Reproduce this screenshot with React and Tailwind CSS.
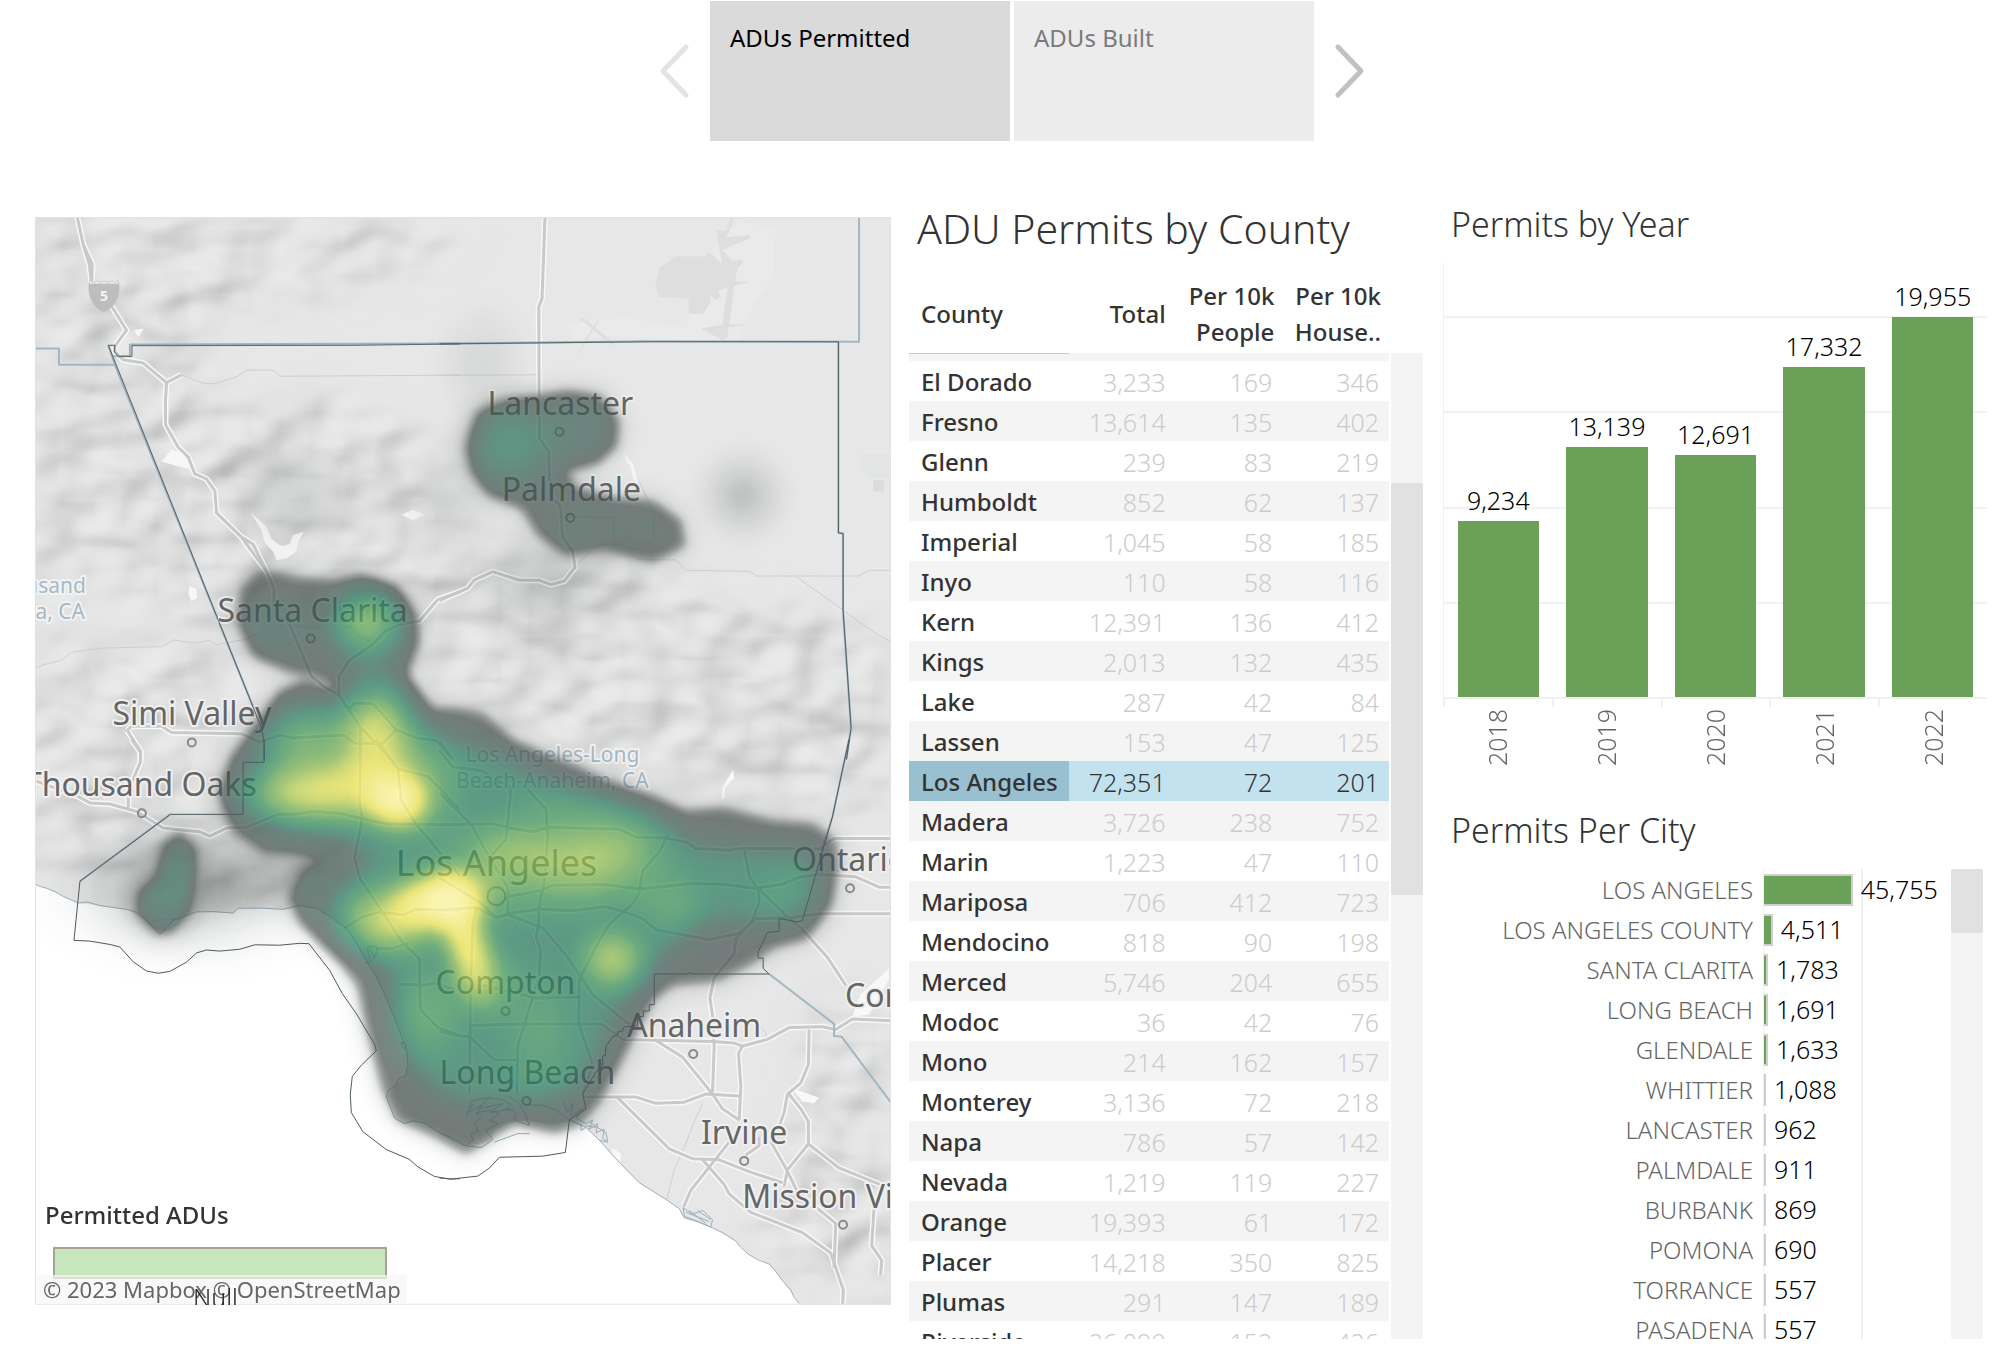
import React from "react";

const counties = [
  ["El Dorado", "3,233", "169", "346"],
  ["Fresno", "13,614", "135", "402"],
  ["Glenn", "239", "83", "219"],
  ["Humboldt", "852", "62", "137"],
  ["Imperial", "1,045", "58", "185"],
  ["Inyo", "110", "58", "116"],
  ["Kern", "12,391", "136", "412"],
  ["Kings", "2,013", "132", "435"],
  ["Lake", "287", "42", "84"],
  ["Lassen", "153", "47", "125"],
  ["Los Angeles", "72,351", "72", "201"],
  ["Madera", "3,726", "238", "752"],
  ["Marin", "1,223", "47", "110"],
  ["Mariposa", "706", "412", "723"],
  ["Mendocino", "818", "90", "198"],
  ["Merced", "5,746", "204", "655"],
  ["Modoc", "36", "42", "76"],
  ["Mono", "214", "162", "157"],
  ["Monterey", "3,136", "72", "218"],
  ["Napa", "786", "57", "142"],
  ["Nevada", "1,219", "119", "227"],
  ["Orange", "19,393", "61", "172"],
  ["Placer", "14,218", "350", "825"],
  ["Plumas", "291", "147", "189"],
  ["Riverside", "26,090", "152", "426"],
];

const years = [
  { year: "2018", value: 9234 },
  { year: "2019", value: 13139 },
  { year: "2020", value: 12691 },
  { year: "2021", value: 17332 },
  { year: "2022", value: 19955 },
];
const YEAR_MAX = 22800;

const cities = [
  ["LOS ANGELES", 45755],
  ["LOS ANGELES COUNTY", 4511],
  ["SANTA CLARITA", 1783],
  ["LONG BEACH", 1691],
  ["GLENDALE", 1633],
  ["WHITTIER", 1088],
  ["LANCASTER", 962],
  ["PALMDALE", 911],
  ["BURBANK", 869],
  ["POMONA", 690],
  ["TORRANCE", 557],
  ["PASADENA", 557],
];
const CITY_MAX = 50000;

/* ---------- map data, one coordinate space per tile ---------- */

const TILES = {
  nw: "translate(0 200) scale(0.33333 0.35714)",
  ne: "translate(440 200) scale(0.33333 0.35714)",
  sw: "translate(0 740) scale(0.33333 0.36991)",
  se: "translate(440 740) scale(0.33333 0.36991)",
};

const roads = {
  nw: [
    "M230,40 L250,125 L268,180 L275,235 L330,290 L380,365 L345,410 L345,425 L370,448 L430,457 L500,512 L497,560 L497,630 L535,693 L565,720 L585,768 L620,782 L645,815 L650,877 L725,945 L800,1040 L823,1090 L823,1150 L870,1190 L935,1335 L975,1365 L1018,1388 L1080,1475 L1175,1568",
    "M250,125 L277,180 L275,235",
    "M500,512 L545,490",
    "M725,945 L760,965 L800,1040",
    "M1018,1388 L1018,1335 L1050,1290 L1120,1245 L1155,1210 L1200,1190 L1260,1180 L1315,1120 L1382,1098",
    "M382,1487 L395,1475 L485,1475 L515,1493 L725,1496 L780,1520 L840,1500 L880,1508 L1030,1500 L1065,1523 L1150,1523 L1190,1485 L1120,1412 L1065,1410 L1045,1430",
    "M1190,1485 L1250,1508 L1310,1515 L1360,1568",
    "M382,1487 L422,1545 L422,1568",
    "M1083,1475 L1080,1568",
  ],
  ne: [
    "M0,1123 L85,1088 L105,1065 L160,1042 L240,1066 L300,1066 L335,1078 L375,1068 L407,1030 L400,985 L370,945 L363,860 L332,825 L328,705 L300,668 L298,300 L308,275 L317,40",
    "M0,1520 L40,1568",
  ],
  sw: [
    "M395,0 L422,35 L422,60 L385,140 L385,185",
    "M100,110 L235,155 L270,172 L330,175 L410,195 L490,240 L600,250 L630,262 L680,240 L740,238 L835,202 L890,202 L940,195 L1020,200 L1090,215 L1160,228 L1382,232",
    "M1083,0 L1080,170 L1088,215 L1065,320 L1080,375 L1150,470 L1205,545 L1260,595 L1262,730 L1315,780 L1382,802",
    "M1130,0 L1195,80 L1205,165 L1250,230 L1325,310 L1382,370",
    "M1195,80 L1285,100 L1382,190",
    "M1035,510 L1090,480 L1140,468 L1215,475 L1245,460 L1382,462",
    "M1130,565 L1180,565 L1225,552",
    "M1200,663 L1280,665 L1300,660 L1382,680",
  ],
  se: [
    "M0,232 L160,228 L210,240 L280,250 L325,238 L540,243 L590,265 L680,267 L740,278 L770,295 L870,300 L910,295 L1140,297 L1185,268 L1360,268",
    "M0,30 L40,75 L130,85 L170,110 L215,130 L200,270 L150,320",
    "M265,135 L320,190 L325,265",
    "M0,462 L110,455 L170,482 L230,468 L300,460 L400,463 L500,453 L550,465 L610,485 L650,515 L810,542 L900,525 L950,485 L1060,482 L1140,472 L1360,472",
    "M205,425 L300,410 L340,395 L500,393 L600,405 L760,390 L850,392 L950,403 L1030,392 L1080,373 L1140,366 L1250,372 L1320,400 L1360,400",
    "M915,297 L930,370 L957,405 L960,440 L940,490 L890,540 L885,580 L825,645 L812,700 L822,760 L825,830 L820,955",
    "M685,260 L660,305 L610,355 L600,415 L580,445 L510,500 L480,545 L420,650 L418,770 L460,880 L430,960",
    "M325,265 L315,380 L298,460 L298,500 L290,535 L303,570 L300,640 L235,830 L232,960",
    "M0,145 L95,230 L150,320 L205,400 L205,475 L310,510 L385,590 L460,690 L560,765 L650,815 L730,860 L820,960 L850,1000 L900,1030",
    "M110,455 L100,500 L92,700 L90,960",
    "M0,375 L120,440 L170,482",
    "M100,660 L200,680 L290,700 L425,697",
    "M85,775 L250,770 L485,770 L550,812 L820,818 L885,822 L910,830 L985,812 L1050,780 L1150,778 L1190,785 L1240,757 L1360,762",
    "M0,790 L45,800 L90,805 L165,868 L240,868",
    "M430,968 L590,968 L650,985 L735,982 L800,960 L900,965",
    "M535,970 L690,1108 L760,1135 L840,1138 L930,1170 L1030,1200",
    "M900,1030 L905,940 L898,850 L910,830",
    "M957,403 L1045,480 L1085,510 L1165,590 L1220,665",
    "M870,1090 L755,1220 L733,1265",
    "M790,1138 L855,1205 L870,1230 L935,1280 L1090,1335 L1175,1390 L1190,1430 L1213,1490 L1210,1540",
    "M995,1090 L1040,1160 L1075,1225 L1190,1310 L1185,1430",
    "M1110,785 L1108,880 L1085,930 L1045,960 L1035,1010 L1015,1060",
    "M1045,955 L1085,1000 L1108,1035 L1108,1095 L1200,1160 L1360,1218",
    "M1108,1095 L1045,1165 L1035,1210",
    "M1305,1270 L1298,1370 L1328,1410 L1325,1450",
    "M960,1075 L960,1100 L920,1125",
  ],
};

const minorRoads = {
  nw: [
    "M545,490 L610,514 L650,514 L712,495 L740,477 L820,477 L840,494 L1382,491",
    "M105,1312 L130,1303 L185,1290 L215,1268 L305,1256 L485,1252 L520,1233 L585,1242 L628,1235 L650,1247 L735,1232 L820,1195",
    "M880,1195 L960,1200 L990,1220 L1030,1195 L1060,1200 L1080,1225 L1120,1240",
  ],
  ne: [
    "M0,491 L298,490",
    "M370,888 L523,890 L523,942 L595,1008 L710,1009 L740,1038 L932,1041 L950,1054 L1258,1054 L1290,1038 L1360,1038",
    "M407,1030 L450,985 L485,965 L550,965",
    "M1072,1056 L1212,1150 L1310,1215 L1360,1240",
    "M600,790 L645,880 L643,945 L600,995",
  ],
  sw: ["M450,497 L480,487 L540,485"],
  se: [
    "M965,780 L982,795 L978,805",
    "M205,480 L240,515 L280,535 L285,570",
    "M790,985 L765,1035 L735,1105 L705,1165 L683,1245",
  ],
};

const seaShapes = {
  sw: "M95,388 L140,403 L190,425 L235,443 L300,450 L380,460 L430,485 L480,528 L520,490 L590,467 L700,470 L715,457 L790,457 L850,460 L900,450 L950,457 L1000,485 L1040,512 L1100,600 L1160,700 L1210,815 L1225,880 L1218,910 L1190,935 L1160,968 L1185,1025 L1215,1040 L1260,1035 L1310,1060 L1382,1088 L1382,1600 L95,1600 Z",
  se: "M58,1092 L80,1100 L150,1090 L165,1060 L205,1040 L270,1030 L330,1045 L390,1035 L440,1050 L480,1085 L540,1145 L600,1200 L680,1245 L720,1270 L735,1295 L820,1322 L890,1358 L930,1395 L990,1420 L1030,1465 L1080,1527 L1080,1600 L0,1600 L0,1065 Z",
};

const coast = {
  sw: [
    "M95,388 L120,398 L140,403 L165,412 L190,425 L235,443 L262,440 L300,450 L380,460 L410,468 L445,495 L480,528 L500,512 L520,490 L590,467 L640,466 L700,470 L715,457 L790,457 L850,460 L900,450 L950,457 L1000,485 L1040,512 L1070,550 L1100,600 L1130,640 L1160,700 L1185,755 L1210,815 L1222,845 L1225,880 L1218,910 L1197,918 L1190,935 L1165,950 L1160,968 L1172,995 L1185,1025 L1215,1040 L1240,1032 L1280,1040 L1310,1060 L1382,1088",
    "M1103,562 L1130,560 L1133,575 L1118,600 L1100,607 L1100,598 L1112,592 L1105,575 Z M1110,565 L1125,590",
    "M1205,820 L1220,825 L1218,838 L1207,832 Z",
  ],
  se: [
    "M0,1065 L30,1080 L60,1093 L80,1100 L100,1085 L95,1068 L115,1060 L105,1040 L125,1020 L110,1010 L150,1005 L180,1012 L150,1030 L175,1040 L140,1060 L160,1082 L150,1090 L125,1105 L80,1100",
    "M80,1020 L95,980 L140,970 L190,975 L215,990 L200,1000 L230,1010 L225,1030 L270,1045 L260,1020 L240,985 L205,965",
    "M100,985 L90,1010 L125,990 L110,1020 M150,965 L120,1000 L190,985 L150,1010 L220,1000",
    "M265,990 L310,990 L350,1003 L390,1030 L440,1050 L480,1085 L540,1145 L600,1200 L680,1245 L720,1270 L735,1295 L775,1305 L820,1322",
    "M370,980 L385,1010 L400,985 L395,1020 L430,1000 L410,1025 L440,1040 L460,1030 L450,1055 L475,1040 L470,1065 L495,1055 L490,1080 L505,1090 L480,1085",
    "M425,1040 L425,1058 L440,1050 M450,1035 L500,1065 L505,1088 M440,1045 L470,1050",
    "M732,1268 L735,1290 L815,1320 L820,1300 L790,1275 L760,1285 L732,1268 M740,1280 L810,1305 M750,1275 L800,1310 M775,1275 L815,1300",
    "M820,1322 L850,1335 L890,1358 L905,1375 L930,1395 L960,1410 L990,1420 L1010,1440 L1030,1465 L1055,1490 L1065,1510 L1080,1527",
    "M165,1090 L235,1067 L270,1067",
  ],
};

const countyBlue = {
  nw: ["M100,416 L177,416 L177,462 L345,462 L325,407", "M340,438 L390,438 L390,405 L1382,402", "M345,462 L785,1478"],
  ne: ["M0,403 L630,396 L1260,397 L1260,40", "M1198,397 L1198,933 L1212,935 L1212,1150 L1236,1480 L1222,1568"],
  sw: ["M240,384 L512,202"],
  se: ["M1230,0 L1180,210 L1140,325", "M990,635 L1185,770 L1185,803 L1208,805 L1360,988"],
};

const countyDark = {
  nw: ["M1382,403 L1060,407 L396,408 L396,438 L355,438 L343,425 L345,407 L325,407 L785,1480 L793,1520 L793,1568"],
  ne: ["M0,403 L630,397 L1198,397 L1198,933 L1212,935 L1212,1150 L1236,1480 L1222,1568"],
  sw: [
    "M793,0 L793,62 L730,62 L730,203 L512,203 L240,384 L222,544 L270,546 L330,555 L360,562 L400,602 L440,627 L475,633 L510,628 L560,603 L590,578 L620,570 L660,573 L720,568 L765,556 L840,557 L900,552 L928,553 L990,625 L1028,688 L1070,742 L1125,825 L1130,843 L1085,882 L1058,912 L1052,960 L1055,1010 L1090,1062 L1160,1110 L1230,1137 L1255,1157 L1305,1183 L1350,1190 L1382,1189",
  ],
  se: [
    "M1230,0 L1180,210 L1090,490 L1075,494 L1020,485 L1020,520 L985,522 L957,575 L957,592 L972,592 L972,620 L990,635 L760,635 L750,632 L745,635 L645,635 L645,718 L630,718 L630,735 L612,735 L612,750 L595,750 L595,775 L555,778 L550,790 L535,792 L535,800 L520,805 L500,830 L498,855 L490,857 L490,885 L470,900 L430,960 L440,1000 L390,1030 L378,1118 L310,1128 L180,1131 L150,1160 L115,1182 L35,1190 L0,1187",
  ],
};

const cityLabels = [
  { t: "Santa Clarita", x: 313, y: 622, c: [311, 639] },
  { t: "Simi Valley", x: 192, y: 726, c: [192, 743] },
  { t: "Lancaster", x: 561, y: 415, c: [560, 432] },
  { t: "Palmdale", x: 572, y: 501, c: [571, 518] },
  { t: "Thousand Oaks", x: 257, y: 797, a: "end", c: [142, 814] },
  { t: "Compton", x: 506, y: 995, c: [506, 1012] },
  { t: "Long Beach", x: 528, y: 1085, c: [527, 1102] },
  { t: "Anaheim", x: 695, y: 1038, c: [694, 1055] },
  { t: "Irvine", x: 745, y: 1145, c: [745, 1162] },
  { t: "Mission Viejo", x: 743, y: 1209, a: "start", c: [844, 1226] },
  { t: "Ontario", x: 793, y: 872, a: "start", c: [851, 889] },
  { t: "Corona", x: 846, y: 1008, a: "start" },
];

const silhouettes = [
  "M240,621 L243,590 L262,573 L300,580 L335,583 L363,577 L395,588 L415,615 L418,645 L405,675 L433,712 L460,711 L483,716 L513,743 L567,764 L600,779 L653,799 L687,813 L723,810 L773,823 L813,826 L835,842 L837,869 L830,906 L807,938 L773,947 L753,962 L717,980 L673,984 L653,999 L640,1022 L623,1056 L600,1100 L580,1124 L555,1132 L515,1122 L490,1138 L467,1153 L435,1135 L400,1120 L385,1090 L367,1020 L360,985 L340,960 L302,922 L293,897 L305,873 L328,862 L300,853 L265,850 L235,830 L222,795 L232,760 L262,725 L280,694 L305,684 L335,694 L345,692 L325,676 L290,670 L255,655 Z",
  "M470,446 L480,415 L507,403 L567,393 L600,398 L617,421 L615,446 L597,462 L563,470 L575,490 L615,500 L653,503 L680,522 L684,545 L653,561 L607,548 L567,553 L540,532 L523,507 L490,493 L475,470 Z",
  "M166,846 L180,836 L193,850 L190,880 L186,912 L170,930 L158,932 L140,912 L142,895 L160,880 Z",
];

const basin =
  "M262,770 L290,722 L320,712 L360,708 L388,690 L408,712 L440,738 L500,752 L560,788 L620,808 L690,842 L760,850 L815,852 L815,890 L790,920 L740,925 L700,925 L650,975 L620,1010 L600,1060 L580,1095 L545,1105 L480,1108 L435,1095 L405,1050 L392,980 L358,940 L330,905 L350,880 L372,856 L340,838 L290,828 L255,805 Z";

/* x, y, rx, ry, strength, rotation */
const hotspots = [
  [512, 445, 75, 70, 0.25, 0],
  [580, 430, 60, 55, 0.13, 0],
  [575, 520, 60, 45, 0.07, 0],
  [640, 530, 60, 40, 0.04, 0],
  [367, 622, 60, 56, 0.48, 0],
  [277, 628, 70, 50, 0.12, 0],
  [370, 650, 60, 70, 0.1, 0],
  [293, 732, 64, 50, 0.14, 0],
  [345, 765, 150, 95, 0.3, 0],
  [376, 728, 56, 80, 0.44, 0],
  [317, 793, 125, 50, 0.46, -4],
  [398, 802, 50, 44, 0.62, 15],
  [400, 790, 90, 76, 0.36, 20],
  [442, 900, 72, 44, 0.66, -10],
  [430, 905, 110, 66, 0.4, -10],
  [466, 940, 40, 96, 0.6, -16],
  [485, 975, 50, 60, 0.2, -16],
  [383, 925, 80, 54, 0.4, 0],
  [515, 852, 100, 56, 0.38, 0],
  [605, 855, 100, 70, 0.44, -12],
  [540, 890, 120, 60, 0.18, 0],
  [560, 807, 80, 40, 0.14, 0],
  [670, 902, 60, 50, 0.2, 0],
  [613, 960, 54, 52, 0.46, 0],
  [793, 899, 60, 50, 0.1, 0],
  [540, 1035, 60, 85, 0.16, 0],
  [424, 1023, 62, 70, 0.2, 0],
  [470, 990, 120, 60, 0.12, 0],
];

const haze = [
  [743, 496, 60, 60, 0.13],
  [483, 365, 60, 80, 0.06],
  [290, 495, 80, 80, 0.08],
  [540, 580, 110, 70, 0.11],
  [190, 890, 180, 100, 0.12],
  [166, 890, 100, 80, 0.08],
  [270, 880, 120, 60, 0.08],
  [450, 500, 80, 80, 0.06],
];

const peaks = [
  "M35,217 L120,217 L330,230 L480,217 L420,270 L250,300 L180,340 L230,420 L330,400 L440,450 L460,560 L430,620 L200,640 L100,560 L35,660 Z",
  "M430,560 L600,545 L700,590 L892,640 L892,810 L720,800 L560,750 L440,700 Z",
  "M60,660 L200,640 L240,700 L180,780 L320,850 L360,900 L200,905 L35,860 L35,700 Z",
  "M820,1000 L892,1020 L892,1305 L760,1260 L800,1120 Z",
];

function Lines({ data, ...props }) {
  return Object.keys(data).map((tile) => (
    <g key={tile} transform={TILES[tile]} fill="none" strokeLinejoin="round" {...props}>
      {[].concat(data[tile]).map((d) => (
        <path key={d} d={d} vectorEffect="non-scaling-stroke" />
      ))}
    </g>
  ));
}

function CountyMap() {
  return (
    <svg
      viewBox="35 217 857 1089"
      className="block w-full"
      role="img"
      aria-label="Heat map of permitted ADUs in Los Angeles County"
      fontFamily='"Noto Sans", sans-serif'
    >
      <defs>
        <radialGradient id="spot">
          <stop offset="0" stopOpacity="1" />
          <stop offset="0.2" stopOpacity="0.9" />
          <stop offset="0.4" stopOpacity="0.65" />
          <stop offset="0.6" stopOpacity="0.35" />
          <stop offset="0.8" stopOpacity="0.1" />
          <stop offset="1" stopOpacity="0" />
        </radialGradient>
        <filter id="edge" x="-20%" y="-20%" width="140%" height="140%">
          <feGaussianBlur stdDeviation="5" />
        </filter>
        <filter id="inner" x="-20%" y="-20%" width="140%" height="140%">
          <feGaussianBlur stdDeviation="13" />
        </filter>
        <filter id="halo" x="-40%" y="-40%" width="180%" height="180%">
          <feGaussianBlur stdDeviation="12" />
        </filter>
        <filter
          id="density"
          filterUnits="userSpaceOnUse"
          x="0"
          y="180"
          width="940"
          height="1150"
          colorInterpolationFilters="sRGB"
        >
          <feColorMatrix
            in="SourceGraphic"
            values="0 0 0 1 0  0 0 0 1 0  0 0 0 1 0  0 0 0 0 1"
          />
          <feComponentTransfer result="ramp">
            <feFuncR type="table" tableValues="0.27 0.27 0.27 0.27 0.23 0.15 0.24 0.5 0.93 1 1" />
            <feFuncG type="table" tableValues="0.31 0.31 0.31 0.31 0.37 0.49 0.58 0.71 0.9 0.97 0.98" />
            <feFuncB type="table" tableValues="0.3 0.3 0.3 0.3 0.33 0.37 0.34 0.3 0.31 0.6 0.74" />
          </feComponentTransfer>
          <feComponentTransfer in="SourceGraphic" result="cover">
            <feFuncA type="table" tableValues="0 0.16 0.44 0.71 0.72 0.72 0.72 0.72 0.72 0.74 0.76" />
          </feComponentTransfer>
          <feComposite in="ramp" in2="cover" operator="in" />
        </filter>
        <filter
          id="terrain"
          filterUnits="userSpaceOnUse"
          x="0"
          y="180"
          width="940"
          height="1150"
          colorInterpolationFilters="sRGB"
        >
          <feTurbulence type="fractalNoise" baseFrequency="0.016 0.022" numOctaves="2" seed="11" result="noise" />
          <feDiffuseLighting in="noise" surfaceScale="11" diffuseConstant="1.02" lightingColor="#e9ebea" result="light">
            <feDistantLight azimuth="225" elevation="62" />
          </feDiffuseLighting>
          <feGaussianBlur in="SourceAlpha" stdDeviation="22" result="soft" />
          <feComposite in="light" in2="soft" operator="in" />
        </filter>
      </defs>

      <rect x="35" y="217" width="857" height="1089" fill="#e7e7e7" />
      <g filter="url(#terrain)" opacity="0.42">
        {peaks.map((d) => (
          <path key={d} d={d} />
        ))}
      </g>

      {/* dry lake and airfields */}
      <g transform={TILES.ne}>
        <path d="M800,160 L900,60 L1010,80 L1000,220 L940,300 L900,390 L760,400 L520,380 L400,390 L380,350 L560,330 L740,360 Z" fill="#eaeaea" />
        <path d="M660,190 L710,158 L800,158 L810,145 L850,180 L840,135 L832,85 L862,85 L875,48 L885,52 L862,105 L932,98 L935,106 L850,140 L880,172 L905,165 L912,175 L895,190 L888,228 L930,230 L885,240 L870,348 L925,350 L868,358 L866,385 L850,393 L785,360 L850,350 L865,245 L835,255 L845,272 L830,280 L815,268 L812,290 L790,320 L750,318 L748,276 L660,272 L648,240 Z" fill="#dedede" />
        <path d="M420,332 L430,328 L528,405 L520,408 Z M485,328 L418,430 L416,428 L460,355 Z" fill="#dedede" />
        <path d="M1265,712 L1350,712 L1350,780 L1290,780 L1265,750 Z" fill="#e2e5e4" />
        <path d="M1302,785 L1335,785 L1335,817 L1302,817 Z" fill="#dcdcdc" />
        <path d="M555,705 L570,730 L582,740 L592,780 L605,820 L590,800 L578,770 L575,745 L562,735 Z" fill="#f6f6f6" />
      </g>
      {/* reservoirs */}
      <g transform={TILES.nw} fill="#f7f7f7">
        <path d="M752,875 L800,915 L815,950 L830,960 L845,970 L870,965 L880,940 L912,930 L895,960 L890,985 L860,1005 L830,1010 L820,985 L795,960 L785,925 Z" />
        <path d="M485,733 L515,700 L560,715 L575,755 L530,745 Z" />
        <path d="M402,365 L432,360 L415,385 Z" />
        <path d="M568,1082 L590,1090 L592,1115 L575,1125 L566,1105 Z" />
        <path d="M1205,882 L1240,868 L1275,882 L1240,898 Z" />
      </g>
      <g transform={TILES.se} fill="#f8f8f8">
        <path d="M850,130 L882,82 L885,105 L858,130 L855,160 L848,162 Z" />
        <path d="M1060,945 L1110,960 L1140,970 L1125,985 L1090,980 Z" />
        <path d="M1240,750 L1265,690 L1350,620 L1350,650 L1290,745 Z" />
        <path d="M515,1105 L545,1120 L545,1140 L530,1145 Z" />
      </g>

      <Lines data={seaShapes} stroke="none" fill="#ffffff" />
      <Lines data={minorRoads} stroke="#cfcfcf" strokeWidth="1" />
      <Lines data={roads} stroke="#f8f8f8" strokeWidth="6" />
      <Lines data={roads} stroke="#c9c9c9" strokeWidth="3" />
      <Lines data={coast} stroke="#9cb0bd" strokeWidth="1" />
      <Lines data={countyBlue} stroke="#a3b6c2" strokeWidth="2" />

      {/* interstate shield */}
      <g>
        <path d="M89,283 H119 C121,294 116,308 104,312 C92,308 87,294 89,283 Z" fill="#bdbdbd" />
        <path d="M90,280 Q93,284 97,281 Q101,284 104,281 Q108,284 112,281 Q116,284 118,280 L119,284 H89 Z" fill="#f4f4f4" stroke="#c6c6c6" />
        <text x="104" y="301" textAnchor="middle" fontSize="14" fontWeight="700" fill="#f4f4f4">5</text>
      </g>

      <g textAnchor="middle" fontSize="21" fill="#a6b9c6" stroke="#f2f2f2" strokeWidth="4" strokeLinejoin="round" style={{ paintOrder: "stroke" }}>
        <text x="553" y="763">Los Angeles-Long</text>
        <text x="553" y="789">Beach-Anaheim, CA</text>
        <text x="86" y="593" textAnchor="end">Thousand</text>
        <text x="85" y="619" textAnchor="end">Oaks-Ventura, CA</text>
      </g>

      <g fontSize="32" fill="#666666" stroke="#f0f0f0" strokeWidth="4" strokeLinejoin="round" style={{ paintOrder: "stroke" }}>
        {cityLabels.map((l) => (
          <text key={l.t} x={l.x} y={l.y} textAnchor={l.a || "middle"}>{l.t}</text>
        ))}
        <text x="497" y="877" textAnchor="middle" fontSize="36">Los Angeles</text>
      </g>
      <g fill="none" stroke="#8a8a8a" strokeWidth="2">
        {cityLabels.filter((l) => l.c).map((l) => (
          <circle key={l.t} cx={l.c[0]} cy={l.c[1]} r="4" />
        ))}
        <circle cx="497" cy="897" r="9" />
      </g>

      <g filter="url(#density)">
        <g filter="url(#halo)" opacity="0.14">
          {silhouettes.map((d) => (
            <path key={d} d={d} stroke="black" strokeWidth="12" />
          ))}
        </g>
        <g filter="url(#edge)" opacity="0.2">
          {silhouettes.map((d) => (
            <path key={d} d={d} stroke="black" strokeWidth="6" strokeLinejoin="round" />
          ))}
        </g>
        <path d={basin} filter="url(#inner)" opacity="0.25" />
        {haze.map(([x, y, rx, ry, o]) => (
          <ellipse key={`${x}-${y}`} cx={x} cy={y} rx={rx} ry={ry} fill="url(#spot)" opacity={o} />
        ))}
        {hotspots.map(([x, y, rx, ry, o, r]) => (
          <ellipse key={`${x}-${y}`} cx={x} cy={y} rx={rx} ry={ry} fill="url(#spot)" opacity={o} transform={`rotate(${r} ${x} ${y})`} />
        ))}
      </g>

      <Lines data={countyDark} stroke="#4d5a60" strokeWidth="1" />
      <rect x="35.5" y="217.5" width="856" height="1088" fill="none" stroke="#e2e2e2" />
    </svg>
  );
}

function MapPanel() {
  return (
    <section className="relative mt-5 overflow-hidden">
      <CountyMap />
      <div className="absolute bottom-0 left-0 flex h-[106px] w-[376px] flex-col gap-4">
        <h3 className="pl-2.5 text-2xl leading-8 font-medium text-[#333]">Permitted ADUs</h3>
        <div className="ml-[18px] h-8 w-[334px] border-2 border-[#a9a294] bg-[#c8e6bc]" />
        <div className="absolute bottom-0.5 left-0.5 bg-[#f7f7f7]/70 px-1.5 text-[22px] leading-7 whitespace-nowrap text-[#666]">
          <a href="#mapbox">© 2023 Mapbox</a> <a href="#osm">© OpenStreetMap</a>
        </div>
        <div className="absolute -bottom-2 left-[158px] text-[25px] leading-8 font-light text-[#222]">Null</div>
      </div>
    </section>
  );
}

function CountyTable() {
  return (
    <section className="pr-0.5">
      <h2 className="pl-2 text-[41px] leading-[62px] font-light whitespace-nowrap text-[#333]">ADU Permits by County</h2>
      <div className="mt-[18px] flex h-[1062px] gap-0.5 overflow-hidden">
        <div className="min-w-0 flex-1 overflow-hidden">
          <table className="w-full table-fixed text-2xl">
            <thead>
              <tr className="h-[76px] leading-9 text-[#333]">
                <th scope="col" className="w-1/3 border-b border-[#c8c8c8] pb-0.5 pl-3 text-left font-medium">County</th>
                <th scope="col" className="pr-2.5 pb-0.5 text-right font-medium">Total</th>
                <th scope="col" className="pr-2 pb-0.5 text-right font-medium whitespace-nowrap">Per 10k<br />People</th>
                <th scope="col" className="pr-2 pb-0.5 text-right font-medium whitespace-nowrap">Per 10k<br />House..</th>
              </tr>
            </thead>
            <tbody>
              <tr className="h-2 bg-[#f4f4f4]" aria-hidden="true"><td colSpan={4} /></tr>
              {counties.map(([name, total, people, homes], i) => {
                const on = name === "Los Angeles";
                const row = on ? "h-10 bg-[#c3e2ef] text-[#333]" : i % 2 ? "h-10 bg-[#f4f4f4] text-[#cccccc]" : "h-10 text-[#cccccc]";
                return (
                  <tr key={name} className={row}>
                    <th scope="row" className={on ? "bg-[#99c0d0] pt-0.5 pl-3 text-left font-medium whitespace-nowrap text-[#333]" : "pt-0.5 pl-3 text-left font-medium whitespace-nowrap text-[#333]"}>{name}</th>
                    <td className="pt-0.5 pr-2.5 text-right text-[25px] leading-8 font-light">{total}</td>
                    <td className="pt-0.5 pr-2.5 text-right text-[25px] leading-8 font-light">{people}</td>
                    <td className="pt-0.5 pr-2.5 text-right text-[25px] leading-8 font-light">{homes}</td>
                  </tr>
                );
              })}
            </tbody>
          </table>
        </div>
        <div className="mt-[76px] w-8 rounded-xs bg-[#f4f4f4] pt-[130px]">
          <div className="h-[412px] rounded-xs bg-[#e1e1e1]" />
        </div>
      </div>
    </section>
  );
}

function YearChart() {
  return (
    <section>
      <h2 className="pl-2 text-[34px] leading-[54px] font-light text-[#333]">Permits by Year</h2>
      <div className="relative mt-3 h-[436px] border-b-2 border-l border-[#f0f0f0]">
        <div className="absolute inset-x-0 bottom-0 flex h-[381px] flex-col justify-between">
          <div className="h-0.5 bg-[#f2f2f2]" />
          <div className="h-0.5 bg-[#f2f2f2]" />
          <div className="h-0.5 bg-[#f2f2f2]" />
          <div className="h-0.5 bg-[#f2f2f2]" />
          <div className="h-0" />
        </div>
        <div className="relative grid h-full grid-cols-5">
          {years.map(({ year, value }) => (
            <div key={year} className="flex flex-col items-center justify-end">
              <span className="text-[25px] leading-[42px] font-light text-black">{value.toLocaleString("en-US")}</span>
              <div className="w-3/4 bg-[#6aa058]" style={{ height: `${(value / YEAR_MAX) * 100}%` }} />
            </div>
          ))}
        </div>
      </div>
      <div className="grid h-[84px] grid-cols-5">
        {years.map(({ year }) => (
          <div key={year} className="flex flex-col items-center">
            <div className="h-2 w-full border-l-2 border-[#f0f0f0]" />
            <span className="mt-0.5 rotate-180 text-[25px] leading-[30px] font-light text-[#666] [writing-mode:vertical-rl]">{year}</span>
          </div>
        ))}
      </div>
    </section>
  );
}

function CityChart() {
  return (
    <section className="mt-5">
      <h2 className="pl-2 text-[34px] leading-[54px] font-light text-[#333]">Permits Per City</h2>
      <div className="mt-3 flex h-[470px] gap-2 overflow-hidden pr-1">
        <div className="min-w-0 flex-1">
          {cities.map(([name, value]) => (
            <div key={name} className="flex h-10 items-center text-2xl">
              <span className="w-80 shrink-0 pt-0.5 pr-2.5 text-right font-light whitespace-nowrap text-[#666]">{name}</span>
              <div className="flex h-10 w-[100px] shrink-0 items-center border-r-2 border-l border-[#f0f0f0] pt-0.5">
                <div
                  className={value > 1500 ? "h-8 min-w-1 shrink-0 border-2 border-l-0 border-[#cfcfcf] bg-[#6aa058]" : "h-8 w-0.5 shrink-0 bg-[#cfcfcf]"}
                  style={value > 1500 ? { width: `${(value / CITY_MAX) * 100}%` } : undefined}
                />
                <span className="pl-2 text-[25px] font-light text-black">{value.toLocaleString("en-US")}</span>
              </div>
            </div>
          ))}
        </div>
        <div className="w-8 rounded-xs bg-[#f4f4f4]">
          <div className="h-16 rounded-xs bg-[#e1e1e1]" />
        </div>
      </div>
    </section>
  );
}

export default function App() {
  return (
    <div className="min-h-screen bg-white pb-8 font-['Noto_Sans',sans-serif]">
      <nav className="flex items-center justify-center gap-[18px] pt-px pl-4">
        <button type="button" aria-label="Previous" className="p-0.5">
          <svg width="32" height="56" viewBox="0 0 32 56" fill="none" stroke="#e3e3e3" strokeWidth="5" strokeLinecap="round" strokeLinejoin="round">
            <path d="M28,4 L5,28 L28,52" />
          </svg>
        </button>
        <div className="flex gap-1">
          <button type="button" className="flex h-[140px] w-[300px] items-start bg-[#dadada] px-5 pt-5 text-left text-2xl leading-[34px] text-black">ADUs Permitted</button>
          <button type="button" className="flex h-[140px] w-[300px] items-start bg-[#ececec] px-5 pt-5 text-left text-2xl leading-[34px] text-[#7b7b7b]">ADUs Built</button>
        </div>
        <button type="button" aria-label="Next" className="p-0.5">
          <svg width="32" height="56" viewBox="0 0 32 56" fill="none" stroke="#c1c1c1" strokeWidth="5" strokeLinecap="round" strokeLinejoin="round">
            <path d="M4,4 L27,28 L4,52" />
          </svg>
        </button>
      </nav>
      <main className="mt-14 grid grid-cols-[minmax(0,856fr)_minmax(0,516fr)_minmax(0,544fr)] items-start gap-[18px] pr-[21px] pl-[35px]">
        <MapPanel />
        <CountyTable />
        <div>
          <YearChart />
          <CityChart />
        </div>
      </main>
    </div>
  );
}
